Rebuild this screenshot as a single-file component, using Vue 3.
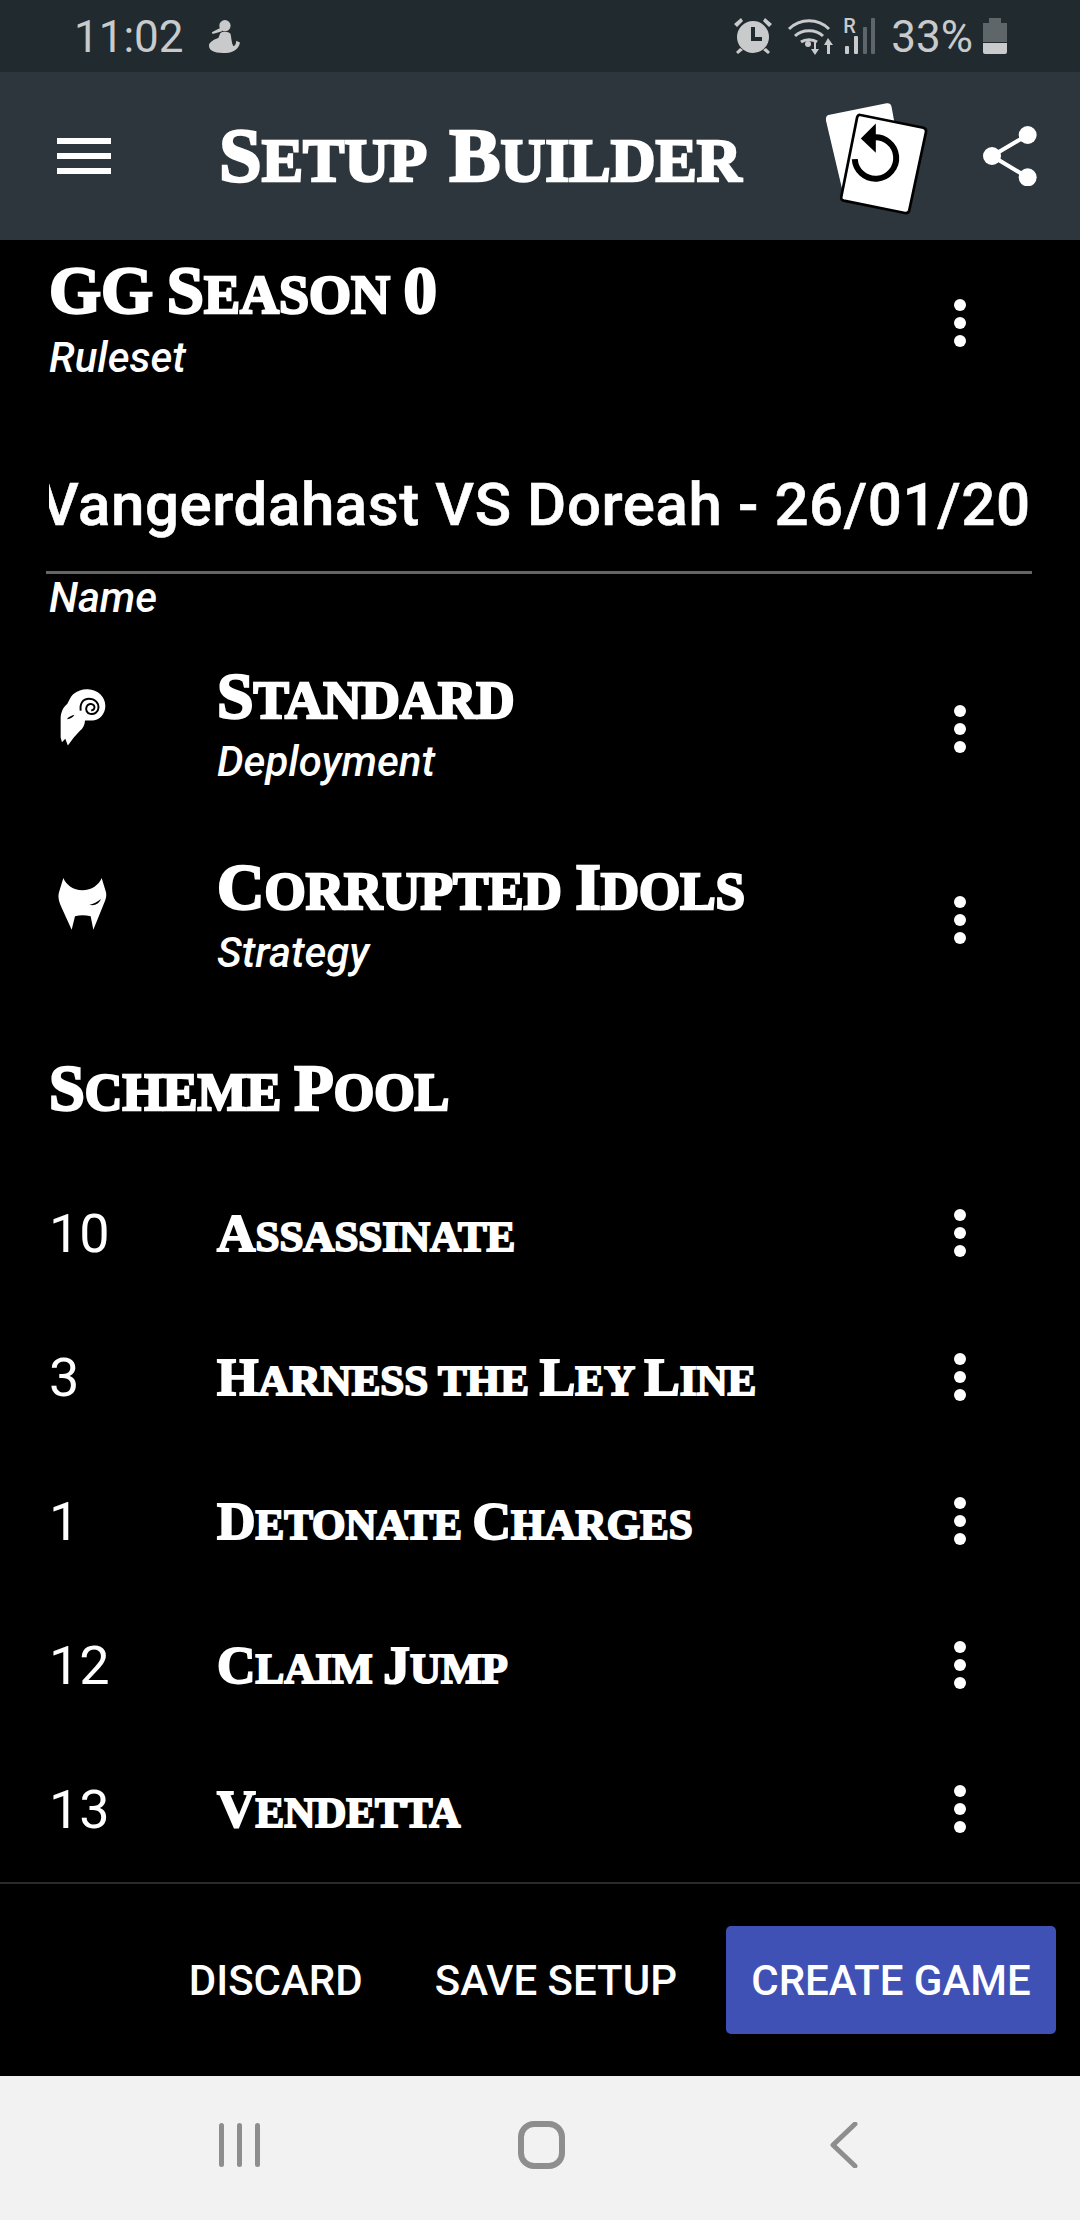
<template>
  <div class="screen">
    <!-- Android status bar -->
    <div class="status-bar">
      <span class="clock">11:02</span>
      <svg class="person" viewBox="0 0 34 36" aria-hidden="true">
        <circle cx="18" cy="7" r="6" />
        <path d="M14 9 L4 14 L5 16 L15 13 Z" />
        <path d="M13 15 C16 13 22 13 24 16 C25 21 25 26 27 29 C29 28 30 26 30 23 L34 25 C33 31 28 36 19 36 C10 36 1 35 1 28 C1 25 5 22 11 20 Z" />
      </svg>
      <span class="grow"></span>
      <svg class="alarm" viewBox="0 0 40 36" aria-hidden="true">
        <path d="M1 6 L8 0 L10 3 L4 9 Z M39 6 L32 0 L30 3 L36 9 Z M7 30 L3 34 L5 36 L10 32 Z M33 30 L37 34 L35 36 L30 32 Z" />
        <circle cx="20" cy="19" r="16" />
        <path d="M18 9 H22 V19 H29 V23 H18 Z" fill="#212a2e" />
      </svg>
      <svg class="wifi" viewBox="0 0 48 37" aria-hidden="true">
        <path d="M2 11 C13 0 31 0 42 11 M8 18 C15 11 29 11 36 18 M14 24 C18 21 26 21 30 24" fill="none" stroke="#c8cacb" stroke-width="3" />
        <circle cx="21" cy="26" r="3" />
        <path d="M27 24 H29 V31 H32 L28 37 L24 31 H27 Z M41 20 L46 27 H43 V36 H40 V27 H37 Z" />
      </svg>
      <div class="signal">
        <span class="roam">R</span>
        <svg viewBox="0 0 32 36" aria-hidden="true">
          <rect x="2" y="28" width="4" height="8" rx="1" />
          <rect x="11" y="18" width="4" height="18" rx="1" />
          <rect x="20" y="9" width="4" height="27" rx="1" fill="#5f666a" />
          <rect x="28" y="0" width="4" height="36" rx="1" fill="#5f666a" />
        </svg>
      </div>
      <span class="battery-text">33%</span>
      <svg class="battery" viewBox="0 0 24 36" aria-hidden="true">
        <path d="M6 0 H18 V5 H24 V24 H0 V5 H6 Z" fill="#5f666a" />
        <path d="M0 25 H24 V34 Q24 36 22 36 H2 Q0 36 0 34 Z" />
      </svg>
    </div>

    <!-- App bar -->
    <header class="app-bar">
      <div class="burger"><span></span><span></span><span></span></div>
      <h1 class="display app-title">
        <span v-for="(run, i) in capRuns('Setup Builder')" :key="i" :class="{ big: run.big }">{{ run.text }}</span>
      </h1>
      <svg class="cards" viewBox="100 60 320 350" aria-hidden="true">
        <path d="M116 105 L290 70 Q302 68 305 80 L345 300 L165 360 L109 122 Q107 108 116 105 Z" fill="#fff" />
        <path d="M212 105 L400 143 Q410 146 408 156 L358 390 Q355 400 345 398 L162 361 Q152 358 155 348 L202 112 Q204 103 212 105 Z" fill="#fff" stroke="#000" stroke-width="8" />
        <path d="M195 237 A62 62 0 1 0 250 172" fill="none" stroke="#000" stroke-width="18" />
        <path d="M213 175 L258 130 V218 Z" fill="#000" />
      </svg>
      <svg class="share" viewBox="0 0 162 180" aria-hidden="true">
        <path d="M134 27 L27 90 L134 154" fill="none" stroke="#fff" stroke-width="12" />
        <circle cx="134" cy="27" r="27" fill="#fff" />
        <circle cx="27" cy="90" r="27" fill="#fff" />
        <circle cx="134" cy="154" r="27" fill="#fff" />
      </svg>
    </header>

    <main class="content">
      <div class="ruleset-row">
        <div class="text-block">
          <div class="display ruleset-title">
            <span v-for="(run, i) in capRuns('GG Season 0')" :key="i" :class="{ big: run.big }">{{ run.text }}</span>
          </div>
          <div class="caption">Ruleset</div>
        </div>
        <div class="kebab"><i></i><i></i><i></i></div>
      </div>

      <div class="name-field">
        <div class="name-input">
          <!-- scrolled a little, as the real input is, so the V is cut at the left -->
          <div class="name-text"><span>Vangerdahast VS Doreah - 26/01/20</span></div>
        </div>
        <div class="caption">Name</div>
      </div>

      <div v-for="item in setupItems" :key="item.label" class="setup-row">
        <div class="setup-icon">
          <svg v-if="item.icon === 'ram'" class="ram" viewBox="90 82 140 175" aria-hidden="true">
            <path d="M130 100 C145 88 160 84 175 85 C205 86 228 108 228 135 C228 162 208 180 188 180 L166 180 C166 192 160 205 150 212 L132 232 L114 256 L106 236 L96 246 L92 232 L92 170 C94 150 102 138 112 130 C118 118 122 108 130 100 Z" />
            <path d="M153 150 C150 128 160 114 178 114 C196 114 208 126 207 142 C206 156 194 162 182 160 C172 158 167 148 171 138 C175 129 187 127 193 134 C198 141 193 150 185 149" fill="none" stroke="#000" stroke-width="6" />
            <path d="M111 176 C116 170 124 165 134 163 C130 170 122 176 111 176 Z" fill="#000" />
          </svg>
          <svg v-else class="mask" viewBox="85 655 145 156" aria-hidden="true">
            <path d="M100 655 C108 675 130 692 157 692 C185 692 207 675 215 655 L228 698 C230 708 228 716 224 726 L190 810 L182 770 C165 766 150 766 135 770 L125 810 L93 740 C87 725 83 712 87 698 Z" />
            <path d="M178 735 C190 733 202 727 213 718 C208 731 194 740 178 735 Z" fill="#000" />
          </svg>
        </div>
        <div class="text-block">
          <div class="display setup-title">
            <span v-for="(run, i) in capRuns(item.title)" :key="i" :class="{ big: run.big }">{{ run.text }}</span>
          </div>
          <div class="caption">{{ item.label }}</div>
        </div>
        <div class="kebab"><i></i><i></i><i></i></div>
      </div>

      <h2 class="display pool-title">
        <span v-for="(run, i) in capRuns('Scheme Pool')" :key="i" :class="{ big: run.big }">{{ run.text }}</span>
      </h2>

      <div v-for="scheme in schemes" :key="scheme.name" class="scheme-row">
        <span class="scheme-count">{{ scheme.count }}</span>
        <span class="display scheme-name">
          <span v-for="(run, i) in capRuns(scheme.name)" :key="i" :class="{ big: run.big }">{{ run.text }}</span>
        </span>
        <div class="kebab"><i></i><i></i><i></i></div>
      </div>
    </main>

    <footer class="actions">
      <button class="action">Discard</button>
      <button class="action">Save Setup</button>
      <button class="action primary">Create Game</button>
    </footer>

    <!-- Android navigation bar -->
    <nav class="nav-bar">
      <div class="recents"><span></span><span></span><span></span></div>
      <div class="home"></div>
      <svg class="back" viewBox="0 0 28 46" aria-hidden="true">
        <path d="M25 2 L3 23 L25 44" fill="none" stroke="#8e8e8e" stroke-width="5" stroke-linecap="round" stroke-linejoin="round" />
      </svg>
    </nav>
  </div>
</template>

<script setup>
const setupItems = [
  { title: 'Standard', label: 'Deployment', icon: 'ram' },
  { title: 'Corrupted Idols', label: 'Strategy', icon: 'mask' },
]

const schemes = [
  { count: 10, name: 'Assassinate' },
  { count: 3, name: 'Harness the Ley Line' },
  { count: 1, name: 'Detonate Charges' },
  { count: 12, name: 'Claim Jump' },
  { count: 13, name: 'Vendetta' },
]

// Splits a title into runs so capitals and digits can sit taller than the small caps
const capRuns = (text) =>
  text.match(/[A-Z0-9]+|[^A-Z0-9]+/g).map((part) => ({
    text: part,
    big: /[A-Z0-9]/.test(part[0]),
  }))
</script>

<style>
html,
body {
  margin: 0;
  background: #000;
}
</style>

<style scoped>
.screen {
  width: 1080px;
  height: 2220px;
  display: flex;
  flex-direction: column;
  overflow: hidden;
  background: #000;
  color: #fff;
  font-family: Roboto, sans-serif;
}

/* Heavy slab small caps used for every heading */
.display {
  margin: 0;
  font-family: 'Liberation Serif', serif;
  font-weight: 700;
  text-transform: uppercase;
  white-space: nowrap;
  -webkit-text-stroke: 2.5px #fff;
}

.big {
  font-size: 1.24em;
}

/* Status bar */
.status-bar {
  height: 72px;
  flex-shrink: 0;
  display: flex;
  align-items: center;
  padding: 0 73px 0 74px;
  box-sizing: border-box;
  background: #212a2e;
  color: #c8cacb;
  fill: #c8cacb;
}

.clock {
  font-size: 44px;
  margin: 2px 24px 0 0;
}

.person {
  width: 32px;
  height: 34px;
}

.grow {
  flex: 1;
}

.alarm {
  width: 40px;
  height: 36px;
  margin-right: 14px;
}

.wifi {
  width: 48px;
  height: 37px;
  margin-right: 8px;
}

.signal {
  width: 32px;
  height: 36px;
  position: relative;
  margin-right: 16px;
}

.signal svg {
  width: 32px;
  height: 36px;
}

.roam {
  position: absolute;
  left: 0;
  top: -4px;
  font-size: 20px;
  font-weight: 500;
}

.battery-text {
  font-size: 44px;
  margin: 2px 10px 0 0;
}

.battery {
  width: 24px;
  height: 36px;
}

/* App bar */
.app-bar {
  height: 168px;
  flex-shrink: 0;
  display: flex;
  align-items: center;
  padding-left: 57px;
  box-sizing: border-box;
  background: #2d363c;
}

.burger {
  width: 54px;
  display: flex;
  flex-direction: column;
  gap: 9px;
  margin-right: 108px;
}

.burger span {
  height: 6px;
  background: #fff;
}

.app-title {
  width: 604px;
  font-size: 62px;
  word-spacing: 10px;
}

.cards {
  width: 107px;
  height: 117px;
  margin-top: 4px;
}

.share {
  width: 54px;
  height: 60px;
  margin-left: 53px;
}

/* Main list */
.content {
  flex: 1;
  padding-left: 49px;
  fill: #fff;
}

.caption {
  font-size: 42px;
  font-style: italic;
  font-weight: 500;
  line-height: 48px;
}

.kebab {
  width: 20px;
  margin: 0 110px 0 auto;
  display: flex;
  flex-direction: column;
  align-items: center;
  gap: 6px;
}

.kebab i {
  width: 12px;
  height: 12px;
  border-radius: 50%;
  background: #fff;
}

.ruleset-row {
  height: 166px;
  display: flex;
  align-items: center;
}

.ruleset-row .text-block {
  align-self: flex-start;
  padding-top: 12px;
}

.ruleset-title {
  font-size: 54px;
  line-height: 77px;
}

.name-field {
  height: 227.5px;
  box-sizing: border-box;
  padding-top: 61px;
}

.name-input {
  width: 986px;
  height: 106.5px;
  margin-left: -3px;
  box-sizing: border-box;
  border-bottom: 3px solid #666;
}

.name-text {
  margin-left: 3px;
  overflow: hidden;
  font-size: 60px;
  font-weight: 500;
  letter-spacing: 0.6px;
  line-height: 76px;
  white-space: nowrap;
  -webkit-text-stroke: 0.6px #fff;
}

.name-text span {
  margin-left: -9px;
}

.setup-row {
  height: 191px;
  display: flex;
  align-items: center;
}

.setup-row .text-block {
  padding-bottom: 14px;
}

.setup-icon {
  width: 168px;
  display: flex;
}

.ram {
  width: 46px;
  height: 58px;
  margin: 0 0 25px 11px;
}

.mask {
  width: 49px;
  height: 52px;
  margin: 0 0 32px 9px;
}

.setup-title {
  font-size: 53px;
  line-height: 76px;
}

.pool-title {
  height: 145px;
  font-size: 52px;
  line-height: 146px;
}

.scheme-row {
  height: 144px;
  display: flex;
  align-items: center;
}

.scheme-count {
  width: 168px;
  padding-top: 2px;
  font-size: 54px;
}

.scheme-name {
  font-size: 43px;
  -webkit-text-stroke-width: 2px;
}

/* Footer actions */
.actions {
  height: 194px;
  flex-shrink: 0;
  box-sizing: border-box;
  border-top: 2px solid #2a2a2a;
  display: flex;
  align-items: center;
  justify-content: flex-end;
  padding-right: 24px;
}

.action {
  border: 0;
  background: none;
  color: #fff;
  font-family: Roboto, sans-serif;
  font-size: 42px;
  font-weight: 500;
  text-transform: uppercase;
  padding: 0;
  height: 108px;
  margin-left: 72px;
}

.action.primary {
  width: 330px;
  margin-left: 49px;
  background: #3f51b5;
  border-radius: 5px;
}

/* Navigation bar */
.nav-bar {
  height: 144px;
  flex-shrink: 0;
  display: flex;
  align-items: center;
  box-sizing: border-box;
  background: #f2f2f2;
  padding: 0 0 6px 219px;
}

.recents {
  display: flex;
  gap: 13px;
  margin-right: 258px;
}

.recents span {
  width: 5px;
  height: 44px;
  border-radius: 3px;
  background: #8e8e8e;
}

.home {
  width: 47px;
  height: 48px;
  box-sizing: border-box;
  border: 6px solid #8e8e8e;
  border-radius: 16px;
}

.back {
  width: 28px;
  height: 46px;
  margin-left: 265px;
}
</style>
